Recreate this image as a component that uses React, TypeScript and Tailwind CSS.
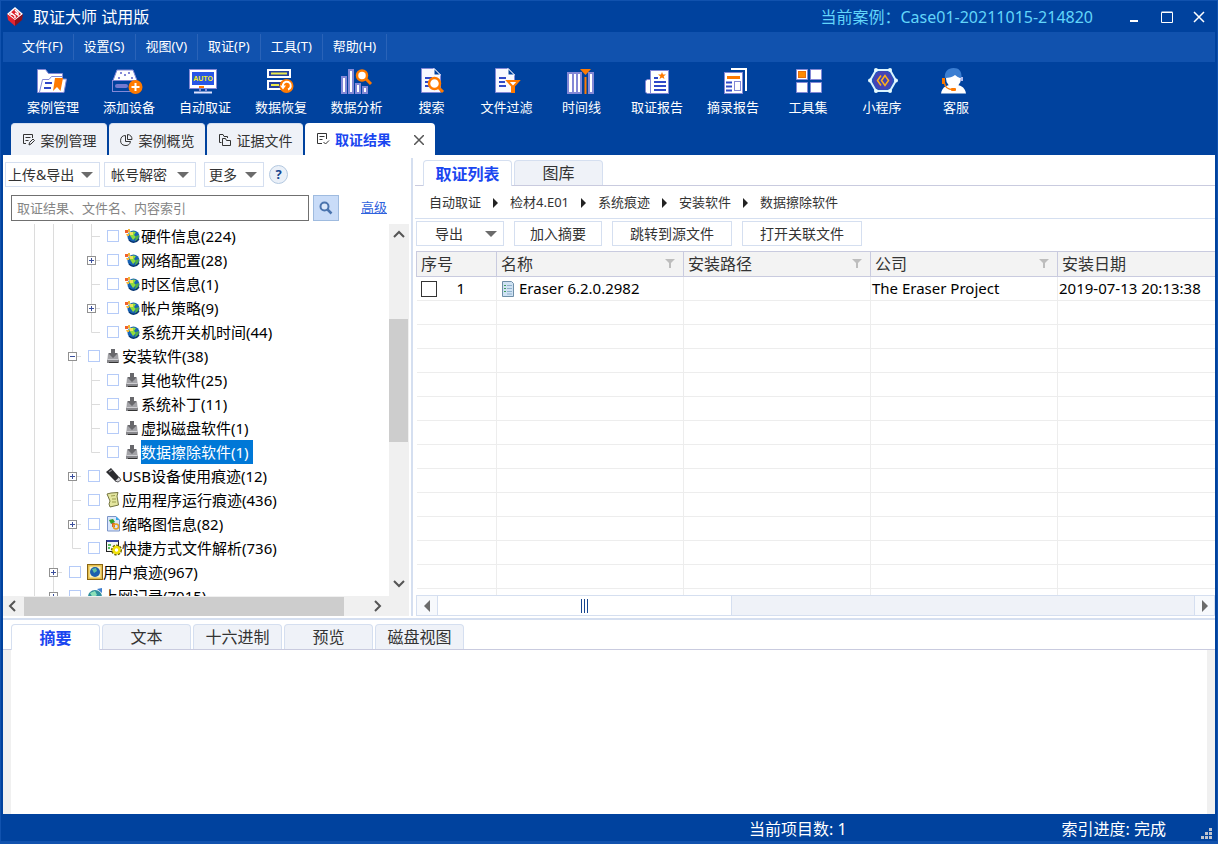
import { useState, type ReactNode } from "react"

const LINE = "#8388d6"
const INK = "#2f48c8"
const ORANGE = "#ff7a00"

function Doc({ x = 4 }: { x?: number }) {
  return (
    <g transform={`translate(${x} 0)`}>
      <path d="M.5 2.5H13L19.5 9V26.5H.5Z" fill="#f7f8ff" stroke={LINE} />
      <path d="M13 2.5V9H19.5Z" fill="#00429e" stroke="#fff" />
      <path d="M4 12H11M4 16H10M4 20H11" stroke={INK} strokeWidth="2" />
    </g>
  )
}

const toolIcons: Record<string, ReactNode> = {
  cases: (
    <>
      <path d="M.5 26.5V3.5H8.5L11.5 7.5H25.5V13H29.5L27 26.5Z" fill="#fff" stroke={LINE} />
      <path d="M2.5 26L5.5 13.5H12L14.5 10.5H25.5" fill="none" stroke={LINE} />
      <path d="M8 17H15M7 22H14" stroke={INK} strokeWidth="2" />
      <path d="M18 12H26L23.5 25L20 21L16 25Z" fill={ORANGE} />
    </>
  ),
  device: (
    <>
      <path d="M4 4H20L24 14.5H0Z" fill="#fff" stroke={LINE} />
      <path d="M7 7H9M15 7H17M5 12H7M18 12H20M11 9H13" stroke={LINE} strokeWidth="2" />
      <rect x="-.5" y="14.5" width="24" height="11" fill="#00429e" stroke={LINE} />
      <rect x="2" y="18" width="13" height="4" rx="2" fill="#7379cf" />
      <circle cx="22.5" cy="21" r="7" fill={ORANGE} />
      <path d="M22.5 17V25M18.5 21H26.5" stroke="#fff" strokeWidth="2" />
    </>
  ),
  auto: (
    <>
      <rect x=".5" y="3.5" width="27" height="19" fill="#fff" stroke={LINE} />
      <rect x="3" y="6" width="22" height="13" fill="#2856e6" />
      <text x="14" y="15" textAnchor="middle" fontSize="7" fontWeight="bold" fill="#f4ef20" fontFamily="Liberation Sans, sans-serif">
        AUTO
      </text>
      <path d="M10 21H15" stroke={ORANGE} strokeWidth="2" />
      <path d="M11 23V25M17 23V25" stroke={LINE} strokeWidth="2" />
      <path d="M5 26.5H23" stroke="#dfe3ff" strokeWidth="2" />
    </>
  ),
  restore: (
    <>
      <rect x="3" y="4" width="22" height="7" fill="#24409c" stroke="#fff" strokeWidth="2" />
      <path d="M6 7.5H22" stroke="#e9e84a" strokeWidth="2" />
      <rect x="3" y="15" width="18" height="8" fill="#24409c" stroke="#fff" strokeWidth="2" />
      <path d="M6 19H14" stroke="#e9e84a" strokeWidth="2" />
      <circle cx="21.5" cy="20" r="7" fill={ORANGE} />
      <path d="M18 21V18.5A4 4 0 1 1 23 23.5" fill="none" stroke="#fff" strokeWidth="2" />
      <path d="M15 19.5H21L18 23.5Z" fill="#fff" />
    </>
  ),
  analyse: (
    <>
      <g fill="#fff" stroke={LINE} strokeWidth="2">
        <path d="M1 11H5V27H1ZM8 4H12V27H8ZM15 18H19V27H15ZM22 21H26V27H22Z" />
      </g>
      <circle cx="21" cy="9.5" r="5" fill="#fff" stroke={ORANGE} strokeWidth="2.5" />
      <path d="M25 13L30 18" stroke={ORANGE} strokeWidth="3" />
    </>
  ),
  search: (
    <>
      <Doc x={5} />
      <circle cx="18.5" cy="17.5" r="5.5" fill="#fff" stroke={ORANGE} strokeWidth="2.5" />
      <path d="M22.5 21.5L27 26" stroke={ORANGE} strokeWidth="3" />
    </>
  ),
  filter: (
    <>
      <Doc />
      <path d="M16.5 15H27.5L23 20V26H21V20Z" fill="#fff" stroke={ORANGE} strokeWidth="2" />
    </>
  ),
  timeline: (
    <>
      <g fill="#fff" stroke={LINE} strokeWidth="2">
        <path d="M2 7H7V27H2ZM7 7H11V27H7ZM11 7H15V27H11ZM23 7H27V27H23Z" />
      </g>
      <path d="M14 3H25L19.5 9Z" fill={ORANGE} />
      <path d="M19.5 11V28" stroke={ORANGE} strokeWidth="2" />
    </>
  ),
  report: (
    <>
      <path d="M9 13.5H6L4.5 15V26L6 27.5H27.5" fill="#fff" stroke={LINE} />
      <rect x="9.5" y="4.5" width="18" height="23" fill="#fff" stroke={LINE} />
      <path d="M21 6L22 8.5H25L22.7 10.2L23.5 13L21 11.4L18.5 13L19.3 10.2L17 8.5H20Z" fill={ORANGE} />
      <path d="M13 12H17M13 16H25M13 20H25M13 24H25" stroke={INK} strokeWidth="2" />
    </>
  ),
  excerpt: (
    <>
      <path d="M14 3H29V25" fill="none" stroke="#fff" strokeWidth="2" />
      <rect x="7.5" y="6.5" width="18" height="21" fill="#fff" stroke={LINE} />
      <path d="M10 11.5H23" stroke={ORANGE} strokeWidth="3" />
      <path d="M9 16.5H15M9 20.5H15M9 24.5H15" stroke={INK} strokeWidth="2" />
      <rect x="17.5" y="15.5" width="6" height="9" fill="none" stroke={LINE} />
    </>
  ),
  tools: (
    <>
      <path
        d="M4.5 3.5H15.5V13.5H4.5ZM18.5 3.5H29.5V13.5H18.5ZM4.5 16.5H15.5V26.5H4.5ZM18.5 16.5H29.5V26.5H18.5Z"
        fill="#fff"
        stroke={LINE}
      />
      <rect x="6.5" y="5.5" width="7" height="6" fill="#ff8a00" stroke="#e86f10" />
    </>
  ),
  applet: (
    <>
      <path d="M10 4H24L30 14.5L24 25H10L4 14.5Z" fill="#2557bd" stroke="#d9f4ff" strokeWidth="2" />
      <circle cx="17" cy="14.5" r="9.5" fill="#4544b4" />
      <g fill="#e5fbff">
        <circle cx="10" cy="4" r="2" />
        <circle cx="24" cy="4" r="2" />
        <circle cx="30" cy="14.5" r="2" />
        <circle cx="24" cy="25" r="2" />
        <circle cx="10" cy="25" r="2" />
        <circle cx="4" cy="14.5" r="2" />
      </g>
      <path d="M15 9.5L11.5 14.5L15 19.5M19 9.5L15.5 14.5L19 19.5L22.5 14.5Z" fill="none" stroke="#ffb11a" strokeWidth="1.5" />
    </>
  ),
  service: (
    <>
      <path d="M1 27.5C2 22 5 20 9 19H18C22 20 25 22 26 27.5Z" fill="#fff" />
      <ellipse cx="13.5" cy="12.5" rx="7.5" ry="8.5" fill="#fff" />
      <path d="M5 12C4 6 8 2 13.5 2S22 5 21.5 12C18 12 17 10 15 9C13 11 9 12 5 12Z" fill="#3b7ed2" />
      <path d="M21 11H23V15H20Z" fill="#aeb9ec" />
      <path d="M2 12H5V18H2Z" fill={ORANGE} />
      <path d="M4.5 17C5 21 8 23.5 13 23.5" fill="none" stroke={ORANGE} strokeWidth="1.5" />
      <rect x="11" y="22" width="5" height="3" rx="1" fill={ORANGE} />
    </>
  ),
}

const tools = [
  ["cases", "案例管理", "w-[76px]"],
  ["device", "添加设备", "w-[76px]"],
  ["auto", "自动取证", "w-[76px]"],
  ["restore", "数据恢复", "w-[76px]"],
  ["analyse", "数据分析", "w-[75px]"],
  ["search", "搜索", "w-[75px]"],
  ["filter", "文件过滤", "w-[75px]"],
  ["timeline", "时间线", "w-[75px]"],
  ["report", "取证报告", "w-[76px]"],
  ["excerpt", "摘录报告", "w-[76px]"],
  ["tools", "工具集", "w-[74px]"],
  ["applet", "小程序", "w-[74px]"],
  ["service", "客服", "w-[74px]"],
]

const menus = ["文件(F)", "设置(S)", "视图(V)", "取证(P)", "工具(T)", "帮助(H)"]

const tabIcons: Record<string, ReactNode> = {
  cases: <path d="M4 9.5H1.5V.5H10.5V4M3.5 3.5H8.5M3.5 6.5H6.5M7 11L7.5 8.5L11 5L12.5 6.5L9 10Z" />,
  overview: <path d="M5.5 1.5A5 5 0 1 0 10.5 7.5H5.5ZM7.5 .5V5.5H12A5 5 0 0 0 7.5 .5Z" />,
  files: <path d="M3.5 8.5H1.5V.5H5L6 2.5H9.5V4M4.5 11.5V4.5H7.5L8.5 6.5H12.5V11.5Z" />,
  results: <path d="M6 10.5H1.5V.5H10.5V6M3.5 3.5H8.5M3.5 6.5H6.5M7.5 9L9.5 11L13 7.5" />,
}

const mainTabs = [
  ["cases", "案例管理"],
  ["overview", "案例概览"],
  ["files", "证据文件"],
]

type Node = { guides: string; icon: string; text: string; selected?: boolean }

// guides: | line, t branch, l last branch, + collapsed, - expanded
const tree: Node[] = [
  { guides: "|||t", icon: "globe", text: "硬件信息(224)" },
  { guides: "|||+", icon: "globe", text: "网络配置(28)" },
  { guides: "|||t", icon: "globe", text: "时区信息(1)" },
  { guides: "|||+", icon: "globe", text: "帐户策略(9)" },
  { guides: "|||l", icon: "globe", text: "系统开关机时间(44)" },
  { guides: "||-", icon: "install", text: "安装软件(38)" },
  { guides: "|||t", icon: "install", text: "其他软件(25)" },
  { guides: "|||t", icon: "install", text: "系统补丁(11)" },
  { guides: "|||t", icon: "install", text: "虚拟磁盘软件(1)" },
  { guides: "|||l", icon: "install", text: "数据擦除软件(1)", selected: true },
  { guides: "||+", icon: "usb", text: "USB设备使用痕迹(12)" },
  { guides: "||t", icon: "scroll", text: "应用程序运行痕迹(436)" },
  { guides: "||+", icon: "thumb", text: "缩略图信息(82)" },
  { guides: "||l", icon: "shortcut", text: "快捷方式文件解析(736)" },
  { guides: "|+", icon: "user", text: "用户痕迹(967)" },
  { guides: "|+", icon: "web", text: "上网记录(7015)" },
]

const nodeIcons: Record<string, ReactNode> = {
  globe: (
    <>
      <circle cx="8.5" cy="8.5" r="6" fill="#1763b5" />
      <path d="M4 6C6 3 9 3 11 4L9 7L11 9L8 12L6 9Z" fill="#8fdc3c" />
      <path d="M11 8L14 7L13 12L10 13Z" fill="#4fae46" />
      <path d="M4 12C7 15 11 15 14 11" fill="none" stroke="#0a3570" strokeWidth="1.5" />
      <path d="M0 2H3V5H0Z" fill="#f0622c" />
      <path d="M3 1H5V4H3ZM1 6H4V8H2Z" fill="#f2b63a" />
      <path d="M4 4H8V7H5Z" fill="#f3e35b" />
    </>
  ),
  install: (
    <>
      <path d="M2 6H12L13 15H1Z" fill="#a3a3a7" />
      <path d="M1 12H13V15H1Z" fill="#88888c" />
      <path d="M3 14.5H12" stroke="#333" />
      <path d="M5 1H9V5H12L7 10L2 5H5Z" fill="#68686c" />
      <path d="M2 11.5H12" stroke="#cfcfd3" />
    </>
  ),
  usb: (
    <>
      <path d="M0 4L5 0L13 9L9 13Z" fill="#2b2b2f" />
      <path d="M3 4L6 2" stroke="#85858a" strokeWidth="1.5" />
      <path d="M9 13L13 9L15 12L12 14Z" fill="#d4d4d8" stroke="#58585c" />
    </>
  ),
  scroll: (
    <>
      <path d="M1 2L5 1L12 0.5L11 4L12.5 13L4 15L3 12L4 9Z" fill="#e4e6a0" stroke="#747440" />
      <path d="M5 4L9 3.5M6 7H10M6 10H10" stroke="#9b9c4c" />
    </>
  ),
  thumb: (
    <>
      <path d="M1.5 .5H10L13.5 4V15H1.5Z" fill="#d9e6fb" stroke="#7a94c8" />
      <path d="M10 .5V4H13.5Z" fill="#35a8e8" />
      <path d="M3 4L7 3L9 6L5 8Z" fill="#33a02c" />
      <path d="M6 7H9V11H6Z" fill="#d85a2a" />
      <circle cx="10" cy="10.5" r="2.5" fill="none" stroke="#e9a020" strokeWidth="1.5" />
    </>
  ),
  shortcut: (
    <>
      <rect x=".5" y=".5" width="12" height="11" fill="#f4f8f4" stroke="#222" />
      <path d="M.5 1H12.5" stroke="#34459c" strokeWidth="2" />
      <path d="M2 5H5M2 8H4" stroke="#23a832" strokeWidth="1.5" />
      <circle cx="10.5" cy="10" r="4" fill="none" stroke="#6c6400" strokeWidth="3" strokeDasharray="2 1" />
      <circle cx="10.5" cy="10" r="3" fill="#fff" stroke="#f2e205" strokeWidth="2.5" />
    </>
  ),
  user: (
    <>
      <rect x=".5" y=".5" width="15" height="15" fill="#e5bf4d" stroke="#8a6512" />
      <rect x="2.5" y="2.5" width="11" height="11" fill="#fff4bd" />
      <circle cx="8" cy="8" r="5" fill="#1d5fae" />
      <path d="M5 5L9 4L10 7L7 9Z" fill="#61c0a0" />
    </>
  ),
  web: (
    <>
      <circle cx="8" cy="9" r="7" fill="#2f8f9c" />
      <path d="M3 5L8 3L10 7L6 10Z" fill="#8ce0b8" />
      <path d="M10 1L15 0V5" fill="#3f7fd0" />
    </>
  ),
}

function Guide({ kind }: { kind: string }) {
  const box = kind === "+" || kind === "-"
  return (
    <svg width="19" height="24" viewBox="0 0 19 24" className="shrink-0">
      <path
        d={kind === "|" ? "M9.5 0V24" : kind === "l" ? "M9.5 0V12.5H18" : "M9.5 0V24M9.5 12.5H18"}
        fill="none"
        stroke="#dcdcdc"
      />
      {box && <rect x="5.5" y="8.5" width="8" height="8" fill="#fff" stroke="#919191" />}
      {box && <path d={kind === "+" ? "M7 12.5H12M9.5 10V15" : "M7 12.5H12"} stroke="#3b4f9c" />}
    </svg>
  )
}

function Caret() {
  return (
    <svg width="12" height="6" viewBox="0 0 12 6" className="shrink-0">
      <path d="M0 0H12L6 6Z" fill="#6b6b6b" />
    </svg>
  )
}

function Chevron({ d }: { d: string }) {
  return (
    <svg width="12" height="12" viewBox="0 0 12 12">
      <path d={d} fill="none" stroke="#555" strokeWidth="2" />
    </svg>
  )
}

function ToolButton({ className, children }: { className: string; children: ReactNode }) {
  return (
    <button className={`flex h-[25px] shrink-0 items-center border border-[#d5dff0] bg-white text-[14px] text-[#333] ${className}`}>
      {children}
    </button>
  )
}

function TitleBar() {
  return (
    <header className="flex h-[31px] shrink-0 items-center pl-1 pr-[10px] text-[16px]">
      <svg width="16" height="20" viewBox="0 0 16 20">
        <path d="M8 0L16 7L8 14L0 7Z" fill="#fff" />
        <path d="M8 2L14 7L8 12L2 7Z" fill="#d91f2a" />
        <path d="M0 7L8 13V19L1 13Z" fill="#e32430" />
        <path d="M16 7L8 13V19L15 13Z" fill="#8d101c" />
        <path d="M4 8V6L8 9V11M8 6L11 8V6L8 3" fill="none" stroke="#fff" strokeWidth="1.5" />
      </svg>
      <h1 className="ml-[10px]">取证大师 试用版</h1>
      <span className="ml-auto text-[#62d5fa]">当前案例：Case01-20211015-214820</span>
      <div className="ml-[36px] flex gap-[20px]">
        <button aria-label="最小化" className="h-3">
          <svg width="12" height="12" viewBox="0 0 12 12">
            <path d="M1 10H9" stroke="#fff" strokeWidth="2" />
          </svg>
        </button>
        <button aria-label="最大化" className="h-3">
          <svg width="12" height="12" viewBox="0 0 12 12">
            <path d="M.5 1.5H11.5V11.5H.5ZM.5 1H11.5" fill="none" stroke="#fff" />
          </svg>
        </button>
        <button aria-label="关闭" className="h-3">
          <svg width="12" height="12" viewBox="0 0 12 12">
            <path d="M1 1L11 11M11 1L1 11" stroke="#fff" strokeWidth="1.5" />
          </svg>
        </button>
      </div>
    </header>
  )
}

function EvidenceTree() {
  return (
    <div className="flex min-h-0 flex-1 flex-col pr-[2px]">
      <div className="flex min-h-0 flex-1">
        <ul className="min-w-0 flex-1 overflow-hidden pl-[22px] text-[15px] text-black">
          {tree.map((node) => (
            <li key={node.text}>
              <label className="flex h-6 items-center whitespace-nowrap leading-6">
                {node.guides.split("").map((kind, i) => (
                  <Guide key={i} kind={kind} />
                ))}
                <input type="checkbox" className="mx-[6px] size-3 shrink-0 appearance-none border border-[#b5cbf8] bg-white" />
                <svg width="16" height="16" viewBox="0 0 16 16" className="shrink-0">
                  {nodeIcons[node.icon]}
                </svg>
                <span className={node.selected ? "bg-[#0078d7] pr-1 text-white" : ""}>{node.text}</span>
              </label>
            </li>
          ))}
        </ul>
        <div className="flex w-5 shrink-0 flex-col items-center bg-[#f0f0f0] pb-[2px]">
          <span className="flex h-[22px] items-center">
            <Chevron d="M1 8L6 3L11 8" />
          </span>
          <span className="flex-[73]" />
          <span className="mr-px w-[19px] flex-[123] bg-[#cdcdcd]" />
          <span className="flex-[132]" />
          <span className="flex h-5 items-center">
            <Chevron d="M1 3L6 8L11 3" />
          </span>
        </div>
      </div>
      <div className="flex h-5 shrink-0 items-center bg-[#f0f0f0] pr-5">
        <span className="flex w-[21px] pl-[3px]">
          <Chevron d="M9 1L4 6L9 11" />
        </span>
        <span className="h-[19px] flex-[320] bg-[#cdcdcd]" />
        <span className="flex-[20]" />
        <span className="flex w-[25px] justify-center">
          <Chevron d="M4 1L9 6L4 11" />
        </span>
      </div>
    </div>
  )
}

function LeftPanel() {
  const [query, setQuery] = useState("")
  return (
    <aside className="flex w-[408px] shrink-0 flex-col pt-[7px]">
      <div className="flex items-center pl-[2px]">
        <ToolButton className="w-[95px] justify-between pl-[2px] pr-[6px]">
          上传&amp;导出
          <Caret />
        </ToolButton>
        <ToolButton className="ml-1 w-[92px] justify-between px-[6px]">
          帐号解密
          <Caret />
        </ToolButton>
        <ToolButton className="ml-2 w-[60px] justify-between pl-1 pr-[6px]">
          更多
          <Caret />
        </ToolButton>
        <button className="ml-[5px] size-[19px] rounded-full border border-[#b3c8e0] bg-[#eaf0f8] text-[13px] font-bold leading-[17px] text-[#17458f]">
          ?
        </button>
      </div>
      <div className="mb-[3px] mt-2 flex items-center pl-2">
        <input
          value={query}
          onChange={(e) => setQuery(e.target.value)}
          aria-label="搜索"
          placeholder="取证结果、文件名、内容索引"
          className="h-[26px] w-[298px] border border-[#707070] px-[5px] text-[13px] text-[#333] outline-none placeholder:text-[#858585]"
        />
        <button aria-label="开始搜索" className="ml-1 flex size-[26px] items-center justify-center border border-[#9fbbdf] bg-[#c9dcf8]">
          <svg width="14" height="14" viewBox="0 0 14 14">
            <circle cx="5.5" cy="5.5" r="4" fill="#dbe8fb" stroke="#4a74ae" strokeWidth="2" />
            <path d="M8.5 8.5L12.5 12.5" stroke="#4a74ae" strokeWidth="2.5" />
          </svg>
        </button>
        <a href="#advanced" className="ml-[22px] text-[13px] text-[#2f62dd] underline">
          高级
        </a>
      </div>
      <EvidenceTree />
    </aside>
  )
}

const columns = ["序号", "名称", "安装路径", "公司", "安装日期"]
const crumbs = ["自动取证", "检材4.E01", "系统痕迹", "安装软件", "数据擦除软件"]

function ResultTable() {
  return (
    <div className="mt-[5px] min-h-0 flex-1 overflow-hidden">
      <table className="w-full table-fixed border-collapse text-[15px] text-black">
        <colgroup>
          <col className="w-[80px]" />
          <col className="w-[187px]" />
          <col className="w-[187px]" />
          <col className="w-[187px]" />
          <col />
        </colgroup>
        <thead>
          <tr className="h-[25px] border-y border-[#c9cbdf] bg-[#f3f3f3] text-[16px] text-[#333]">
            {columns.map((name, i) => (
              <th key={name} className="border-l border-[#c9cbdf] p-0 pl-1 text-left font-normal leading-6">
                <div className="flex items-center justify-between pr-2">
                  {name}
                  {i > 0 && i < 4 && (
                    <svg width="10" height="10" viewBox="0 0 10 10">
                      <path d="M0 0H10L6 4V9H4V4Z" fill="#bdbdbd" />
                    </svg>
                  )}
                </div>
              </th>
            ))}
          </tr>
        </thead>
        <tbody>
          <tr className="h-6 border-b border-[#ededed] leading-[23px]">
            <td className="p-0">
              <div className="flex items-center pl-1">
                <input type="checkbox" aria-label="选择 Eraser 6.2.0.2982" className="size-4 appearance-none border border-[#333] bg-white" />
                <span className="ml-5">1</span>
              </div>
            </td>
            <td className="border-l border-[#ededed] p-0">
              <div className="flex items-center gap-1 pl-1">
                <svg width="14" height="16" viewBox="0 0 14 16">
                  <path d="M1.5 .5H10.5L12.5 2.5V15.5H1.5Z" fill="#cfe2f3" stroke="#6f8fa8" />
                  <path d="M6 4.5H11M6 7.5H11M6 10.5H11M6 13H11" stroke="#8fb0cc" />
                  <path d="M3 4.5H5M3 7.5H5M3 10.5H5" stroke="#3d9d5a" />
                </svg>
                Eraser 6.2.0.2982
              </div>
            </td>
            <td className="border-l border-[#ededed] p-0" />
            <td className="border-l border-[#ededed] p-0 pl-px">The Eraser Project</td>
            <td className="whitespace-nowrap border-l border-[#ededed] p-0 pl-px">2019-07-13 20:13:38</td>
          </tr>
          {Array.from({ length: 13 }, (_, row) => (
            <tr key={row} className="h-6 border-b border-[#ededed]">
              <td className="p-0" />
              <td className="border-l border-[#ededed] p-0" />
              <td className="border-l border-[#ededed] p-0" />
              <td className="border-l border-[#ededed] p-0" />
              <td className="border-l border-[#ededed] p-0" />
            </tr>
          ))}
        </tbody>
      </table>
    </div>
  )
}

function RightPanel() {
  return (
    <main className="ml-[2px] flex min-w-0 flex-1 flex-col pt-[5px]">
      <div className="flex shrink-0 gap-[2px] border-b border-[#c9cbdf] pl-2 text-[16px]">
        <button className="-mb-px h-[26px] w-[89px] rounded-t border border-b-0 border-[#d5dff0] bg-white font-bold leading-6 text-[#1a46f0]">
          取证列表
        </button>
        <button className="h-[25px] w-[89px] rounded-t border border-b-0 border-[#d5dff0] bg-[#eff2f8] leading-6 text-[#333]">图库</button>
      </div>
      <nav className="flex h-[33px] shrink-0 items-center gap-3 border-b border-[#d5dff0] pl-[14px] pt-[2px] text-[13px] text-[#333]">
        {crumbs.map((crumb, i) => (
          <div key={crumb} className="flex items-center gap-3">
            {i > 0 && (
              <svg width="5" height="10" viewBox="0 0 5 10">
                <path d="M0 0L5 5L0 10Z" fill="#222" />
              </svg>
            )}
            <a href="#crumb">{crumb}</a>
          </div>
        ))}
      </nav>
      <div className="ml-px mt-[2px] flex shrink-0 gap-[10px]">
        <ToolButton className="w-[88px] justify-between pl-[18px] pr-[6px]">
          导出
          <Caret />
        </ToolButton>
        <ToolButton className="w-[88px] justify-center">加入摘要</ToolButton>
        <ToolButton className="w-[120px] justify-center">跳转到源文件</ToolButton>
        <ToolButton className="w-[120px] justify-center">打开关联文件</ToolButton>
      </div>
      <div className="ml-px flex min-h-0 flex-1 flex-col">
        <ResultTable />
        <div className="flex h-[21px] shrink-0 border border-[#d5dff0] bg-[#eff2f8]">
          <span className="flex w-5 items-center justify-center bg-[#f7f9fc]">
            <svg width="6" height="12" viewBox="0 0 6 12">
              <path d="M6 0V12L0 6Z" fill="#6b6b6b" />
            </svg>
          </span>
          <span className="flex flex-[294] items-center justify-center gap-[2px] border-x border-[#d5dff0] bg-white">
            <span className="h-[14px] w-px bg-[#17458f]" />
            <span className="h-[14px] w-px bg-[#17458f]" />
            <span className="h-[14px] w-px bg-[#17458f]" />
          </span>
          <span className="flex-[463]" />
          <span className="flex w-5 items-center justify-center border-l border-[#d5dff0] bg-[#f7f9fc]">
            <svg width="6" height="12" viewBox="0 0 6 12">
              <path d="M0 0V12L6 6Z" fill="#6b6b6b" />
            </svg>
          </span>
        </div>
      </div>
    </main>
  )
}

const detailTabs = ["摘要", "文本", "十六进制", "预览", "磁盘视图"]

function DetailPanel() {
  const [active, setActive] = useState("摘要")
  return (
    <section className="flex h-[196px] shrink-0 flex-col border-t-2 border-[#d5dff0] bg-white pt-1">
      <div className="flex shrink-0 gap-[2px] border-b border-[#c9cbdf] pl-2 text-[16px]">
        {detailTabs.map((name) => (
          <button
            key={name}
            onClick={() => setActive(name)}
            className={
              name === active
                ? "-mb-px h-[26px] w-[89px] rounded-t border border-b-0 border-[#d5dff0] bg-white font-bold leading-6 text-[#1a46f0]"
                : "h-[25px] w-[89px] rounded-t border border-b-0 border-[#d5dff0] bg-[#eff2f8] leading-6 text-[#333]"
            }
          >
            {name}
          </button>
        ))}
      </div>
      <div className="flex-1 border-x-8 border-[#f0f0f0]" />
    </section>
  )
}

export default function App() {
  return (
    <div className="flex h-screen flex-col overflow-hidden border border-b-[3px] border-[#1152ae] bg-[#00429e] px-[2px] font-['Noto_Sans','Noto_Sans_CJK_SC',sans-serif] text-white">
      <TitleBar />
      <nav className="flex h-[30px] shrink-0 items-center bg-[#1152ae] pl-[9px] text-[13px]">
        {menus.map((name) => (
          <button key={name} className="h-[26px] border-r border-[#2a63b8] px-[10px]">
            {name}
          </button>
        ))}
      </nav>
      <div className="flex h-[61px] shrink-0 pl-3 pt-1 text-[13px]">
        {tools.map(([icon, name, width]) => (
          <button key={icon} className={`flex shrink-0 flex-col items-center leading-[18px] ${width}`}>
            <svg width="32" height="32" viewBox="0 0 32 32" className="overflow-visible">
              {toolIcons[icon]}
            </svg>
            {name}
          </button>
        ))}
      </div>
      <div className="flex h-8 shrink-0 gap-[2px] pl-2 text-[14px]">
        {mainTabs.map(([icon, name]) => (
          <button
            key={icon}
            className="flex w-24 items-center justify-center gap-[5px] rounded-t border-t border-[#d5dff0] bg-[#eff2f8] pt-[2px] text-[#333]"
          >
            <svg width="14" height="13" viewBox="0 0 14 13" fill="none" stroke="#333">
              {tabIcons[icon]}
            </svg>
            {name}
          </button>
        ))}
        <div className="flex w-[130px] items-center rounded-t bg-white px-[11px] pt-px">
          <button className="flex items-center gap-[5px] font-bold text-[#1a46f0]">
            <svg width="14" height="13" viewBox="0 0 14 13" fill="none" stroke="#333">
              {tabIcons.results}
            </svg>
            取证结果
          </button>
          <button aria-label="关闭标签" className="ml-auto">
            <svg width="10" height="10" viewBox="0 0 10 10">
              <path d="M0 0L10 10M10 0L0 10" stroke="#555" strokeWidth="1.5" />
            </svg>
          </button>
        </div>
      </div>
      <div className="flex min-h-0 flex-1 bg-white pb-[2px]">
        <LeftPanel />
        <div className="mt-[3px] w-[2px] shrink-0 bg-[#d5dff0]" />
        <RightPanel />
      </div>
      <DetailPanel />
      <footer className="flex h-[27px] shrink-0 items-center pr-[3px] text-[16px]">
        <span className="ml-auto pt-[2px]">当前项目数: 1</span>
        <span className="ml-[215px] pt-[2px]">索引进度: 完成</span>
        <svg width="11" height="11" viewBox="0 0 11 11" className="ml-[35px] mt-3">
          <path d="M8 0H11V3H8ZM4 4H7V7H4ZM8 4H11V7H8ZM0 8H3V11H0ZM4 8H7V11H4ZM8 8H11V11H8Z" fill="#bfc4cf" />
        </svg>
      </footer>
    </div>
  )
}
